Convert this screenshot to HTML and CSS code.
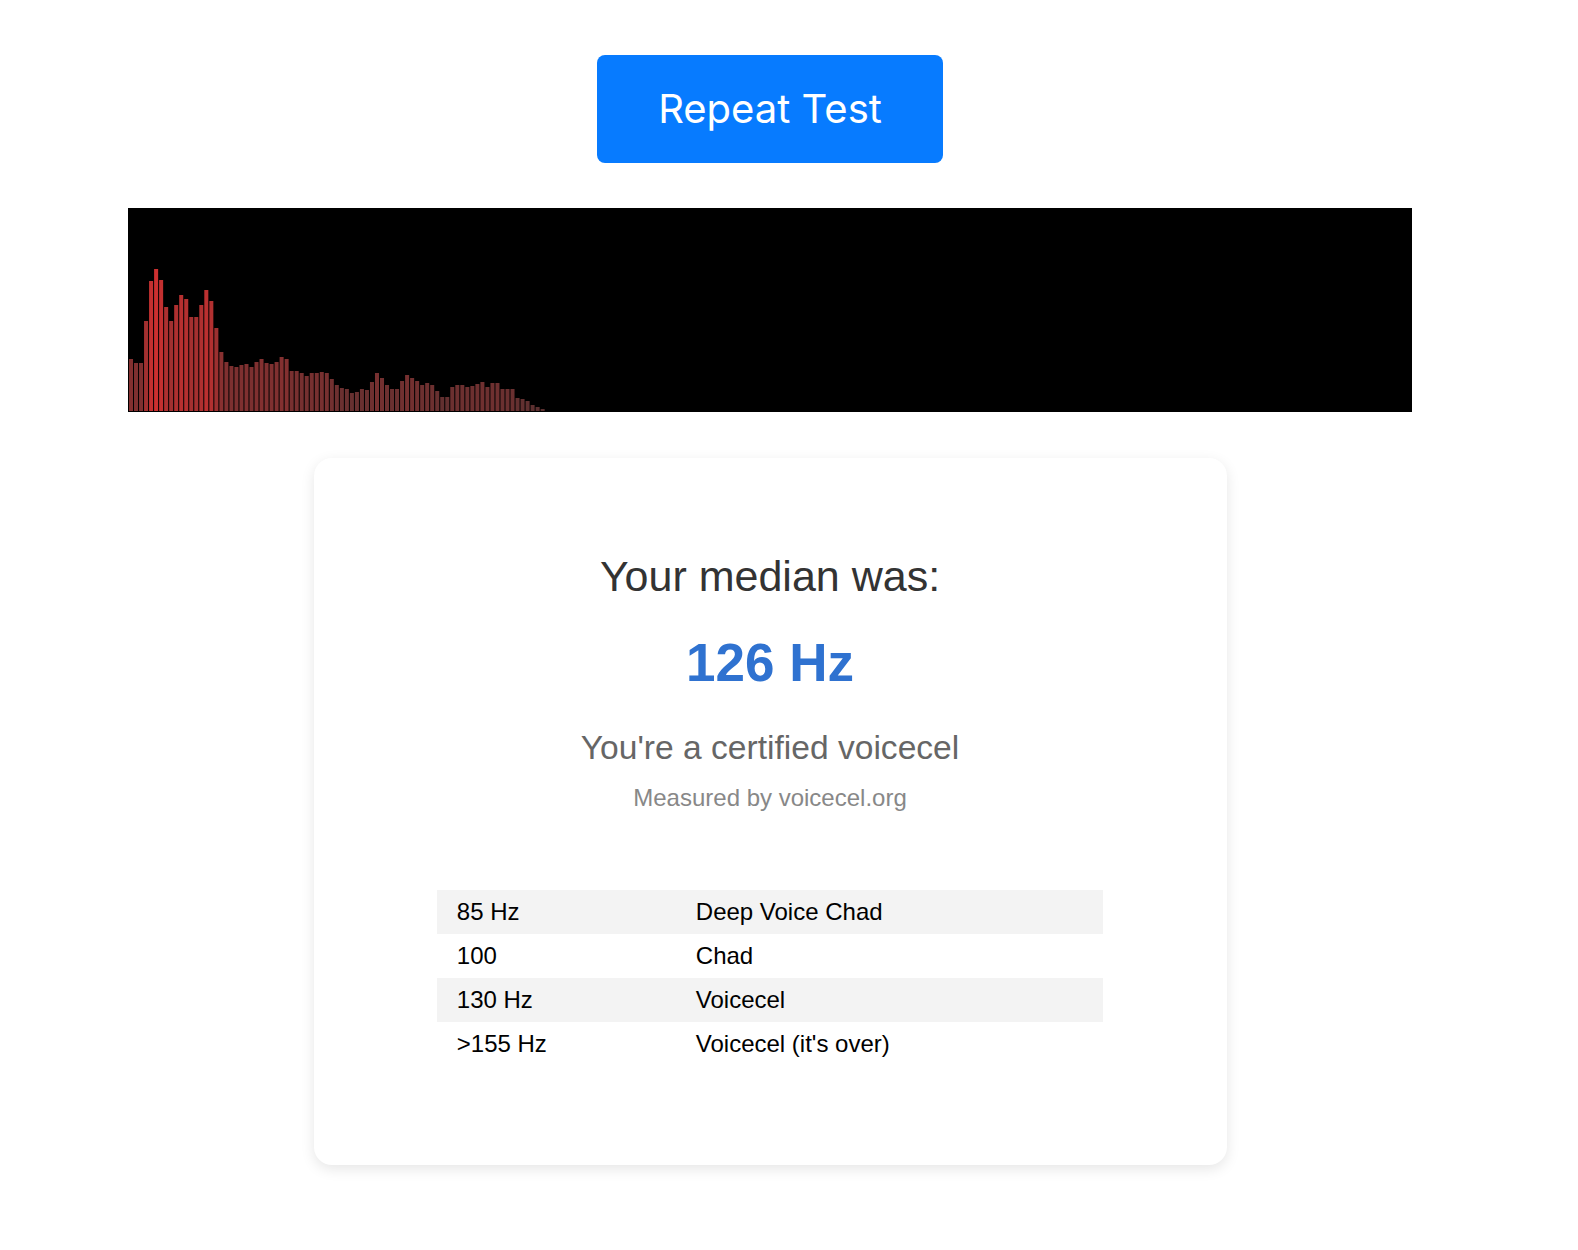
FILE: index.html
```html
<!DOCTYPE html>
<html lang="en">
<head>
  <meta charset="UTF-8" />
  <meta name="viewport" content="width=device-width, initial-scale=1" />
  <title>Voicecel - Result</title>
  <link rel="stylesheet" href="styles.css">
</head>
<body>
  <main class="page">
    <button class="repeat-btn" type="button">Repeat Test</button>

    <!-- frequency visualizer -->
    <canvas id="visualizer" width="1284" height="204"></canvas>

    <section class="result-card">
      <h2 class="result-title">Your median was:</h2>
      <div class="result-value">126 Hz</div>
      <p class="result-verdict">You're a certified voicecel</p>
      <p class="result-source">Measured by voicecel.org</p>

      <table class="scale">
        <tr><td>85 Hz</td><td>Deep Voice Chad</td></tr>
        <tr><td>100</td><td>Chad</td></tr>
        <tr><td>130 Hz</td><td>Voicecel</td></tr>
        <tr><td>&gt;155 Hz</td><td>Voicecel (it's over)</td></tr>
      </table>
    </section>
  </main>

  <script>
    const bars = [
      52, 48, 48, 90, 130, 142, 131, 104, 90, 106, 116, 112, 94, 94, 106, 121, 110, 83, 59, 49, 45,
      44, 46, 47, 44, 49, 52, 48, 47, 49, 54, 52, 40, 40, 38, 35, 38, 38, 39, 38, 32, 26, 23,
      22, 18, 19, 22, 21, 29, 38, 33, 26, 22, 22, 30, 36, 33, 30, 26, 28, 26, 20, 14, 14, 24,
      26, 26, 24, 25, 27, 29, 24, 28, 28, 22, 22, 22, 13, 12, 10, 6, 4, 2
    ];

    const canvas = document.getElementById("visualizer");
    const ctx = canvas.getContext("2d");
    const WIDTH = canvas.width;
    const HEIGHT = canvas.height;

    ctx.fillStyle = "#000";
    ctx.fillRect(0, 0, WIDTH, HEIGHT);

    let barWidth = 4.02;
    let x = 1;
    for (let i = 0; i < bars.length; i++) {
      let h = bars[i];
      let r = Math.round(88 + h * 0.82);
      ctx.fillStyle = "rgb(" + r + ",48,48)";
      ctx.fillRect(x, HEIGHT - h - 1, barWidth, h);
      x += barWidth + 1;
    }
  </script>
</body>
</html>
```

FILE: styles.css
```css
body {
  margin: 0;
  background: #fff;
  font-family: "Liberation Sans", Arial, sans-serif;
}

.page {
  width: 1540px;
  padding: 55px 0 80px;
  display: flex;
  flex-direction: column;
  align-items: center;
}

.repeat-btn {
  font-family: Inter, "Noto Sans", sans-serif;
  font-size: 40px;
  line-height: 47px;
  color: #fff;
  background: #077bff;
  border: none;
  border-radius: 8px;
  padding: 30px 61px 31px;
  cursor: pointer;
}

#visualizer {
  display: block;
  width: 1284px;
  height: 204px;
  margin-top: 45px;
  background: #000;
}

.result-card {
  box-sizing: border-box;
  width: 913px;
  margin-top: 46px;
  padding: 94px 40px 99px;
  background: #fff;
  border-radius: 18px;
  box-shadow: 0 4px 14px rgba(0, 0, 0, 0.1);
  text-align: center;
}

.result-title {
  margin: 0;
  font-size: 43px;
  line-height: 49px;
  font-weight: normal;
  color: #333;
}

.result-value {
  margin-top: 32px;
  font-size: 53px;
  line-height: 60px;
  font-weight: bold;
  color: #2f72d0;
}

.result-verdict {
  margin: 36px 0 0;
  font-size: 33.6px;
  line-height: 38px;
  color: #666;
}

.result-source {
  margin: 17px 0 0;
  font-size: 24px;
  line-height: 28px;
  color: #888;
}

.scale {
  width: 80%;
  margin: 78px auto 0;
  border-collapse: collapse;
  text-align: left;
}

.scale td {
  padding: 8px 20px;
  font-size: 24px;
  line-height: 28px;
  color: #000;
}

.scale td:first-child {
  width: 199px;
}

.scale tr:nth-child(odd) {
  background: #f3f3f3;
}
```
